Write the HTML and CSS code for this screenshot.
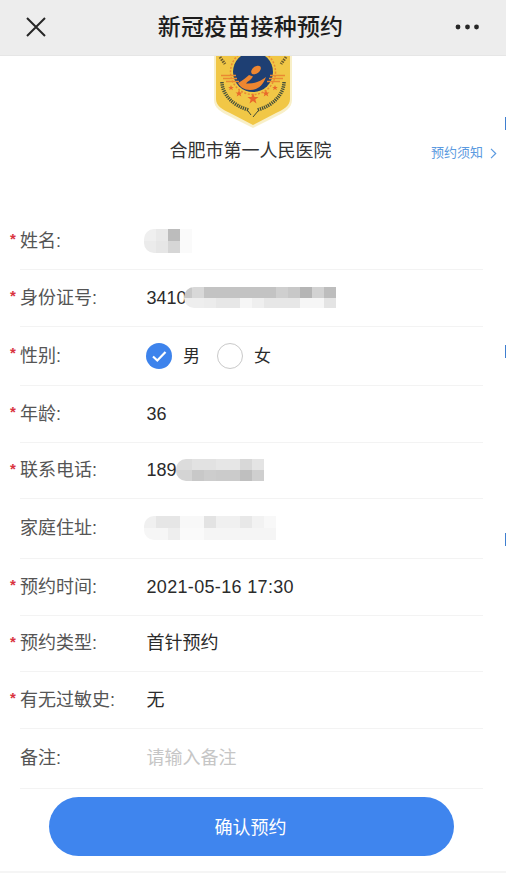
FILE: index.html
```html
<!DOCTYPE html>
<html lang="zh-CN">
<head>
<meta charset="utf-8">
<title>新冠疫苗接种预约</title>
<link rel="stylesheet" href="styles.css">
</head>
<body>
<div class="page">
  <header class="topbar">
    <svg class="close-icon" width="22" height="22" viewBox="0 0 22 22"><path d="M2 2 20 20M20 2 2 20" fill="none" stroke="#262626" stroke-width="2"/></svg>
    <h1 class="title">新冠疫苗接种预约</h1>
    <svg class="more-icon" width="28" height="6" viewBox="0 0 28 6"><circle cx="4" cy="3" r="2.4" fill="#262626"/><circle cx="13.5" cy="3" r="2.4" fill="#262626"/><circle cx="22.5" cy="3" r="2.4" fill="#262626"/></svg>
  </header>

  <section class="hero">
    <svg class="badge" width="80" height="73" viewBox="0 0 80 73">
      <path d="M1 0V44C1 52 8 56 16 60L40 72 64 60C72 56 79 52 79 44V0Z" fill="#f8efc8"/>
      <path d="M3 0V43C3 50 10 54 17 57L40 69 63 57C70 54 77 50 77 43V0Z" fill="#f1c746"/>
      <path d="M7 1 12 8M73 1 68 8" stroke="#6b5a2c" stroke-width="3" stroke-dasharray="1.500 1"/>
      <circle cx="40" cy="16" r="22.500" fill="none" stroke="#e98b35" stroke-width="1.500" stroke-dasharray="2 1.500"/>
      <circle cx="40" cy="16" r="20" fill="#1e3f73"/>
      <path d="M8 19.500H23M10 22.500H24M13 25.500H26M72 19.500H57M70 22.500H56M67 25.500H54" stroke="#ea8a32" stroke-width="1.400"/>
      <ellipse cx="43" cy="14" rx="5.500" ry="3.500" transform="rotate(-38 43 14)" fill="#ee8630"/>
      <path d="M25 27C30 24 33 22 36 19L40 20.500C38 24 35 25 33 27.500C40 28 47 26 53 21C50 30 44 34 37 34C31 34 27 31 25 27Z" fill="#ee8630"/>
      <path d="M9 26C9 38 20 50 36 54" fill="none" stroke="#46503a" stroke-width="3.500" stroke-dasharray="1.300 .9"/>
      <path d="M71 26C71 38 60 50 44 54" fill="none" stroke="#46503a" stroke-width="3.500" stroke-dasharray="1.300 .9"/>
      <path d="M35 55 38 59M45 55 40 61" stroke="#3f4a38" stroke-width="1"/>
      <path d="M40 37 41.500 41H45.500L42.300 43.500 43.500 47.500 40 45 36.500 47.500 37.700 43.500 34.500 41H38.500Z" fill="#e9692c"/>
      <path d="M26 34 27 36.500H29.500L27.500 38 28.300 40.500 26 39 23.700 40.500 24.500 38 22.500 36.500H25Z" fill="#e9692c"/>
      <path d="M53 34 54 36.500H56.500L54.500 38 55.300 40.500 53 39 50.700 40.500 51.500 38 49.500 36.500H52Z" fill="#e9692c"/>
      <path d="M18 29 18.800 31H20.800L19.200 32.200 19.800 34.200 18 33 16.200 34.200 16.800 32.200 15.200 31H17.200Z" fill="#e9692c"/>
      <path d="M62 29 62.800 31H64.800L63.200 32.200 63.800 34.200 62 33 60.200 34.200 60.800 32.200 59.200 31H61.200Z" fill="#e9692c"/>
    </svg>
    <div class="hero-line">
      <span></span>
      <h2 class="hospital">合肥市第一人民医院</h2>
      <a class="notice">预约须知<svg width="7" height="11" viewBox="0 0 7 11"><path d="M1 .8 5.700 5.500 1 10.200" fill="none" stroke="#5b9ae0" stroke-width="1.200"/></svg></a>
    </div>
  </section>

  <form class="form">
    <div class="row h57"><i class="star">*</i><div class="cell"><span class="label">姓名:</span>
      <svg class="mosaic shift-name" width="48" height="24" viewBox="0 0 48 24"><rect width="12" height="12" fill="#efefef"/><rect x="12" width="12" height="12" fill="#e9e9e9"/><rect x="24" width="12" height="12" fill="#bcbcbc"/><rect x="36" width="12" height="12" fill="#fafafa"/><rect y="12" width="12" height="12" fill="#ebebeb"/><rect x="12" y="12" width="12" height="12" fill="#e6e6e6"/><rect x="24" y="12" width="12" height="12" fill="#d6d6d6"/><rect x="36" y="12" width="12" height="12" fill="#fafafa"/></svg>
    </div></div>
    <div class="row h57"><i class="star">*</i><div class="cell"><span class="label">身份证号:</span><span class="value">3410</span>
      <svg class="mosaic shift-id" width="152" height="21" viewBox="0 0 152 21"><g><rect width="8" height="11" fill="#c8c8c8"/><rect x="8" width="12" height="11" fill="#d8d8d8"/><rect x="20" width="72" height="11" fill="#c3c3c3"/><rect x="92" width="12" height="11" fill="#cfcfcf"/><rect x="104" width="12" height="11" fill="#c8c8c8"/><rect x="116" width="12" height="11" fill="#b5b5b5"/><rect x="128" width="12" height="11" fill="#d2d2d2"/><rect x="140" width="12" height="11" fill="#bdbdbd"/></g><g><rect y="11" width="20" height="10" fill="#eeeeee"/><rect x="20" y="11" width="12" height="10" fill="#ececec"/><rect x="32" y="11" width="24" height="10" fill="#e7e7e7"/><rect x="56" y="11" width="12" height="10" fill="#f6f6f6"/><rect x="68" y="11" width="12" height="10" fill="#efefef"/><rect x="80" y="11" width="36" height="10" fill="#e7e7e7"/><rect x="116" y="11" width="24" height="10" fill="#f6f6f6"/><rect x="140" y="11" width="12" height="10" fill="#e4e4e4"/></g></svg>
    </div></div>
    <div class="row h59"><i class="star">*</i><div class="cell"><span class="label">性别:</span>
      <div class="radios">
        <svg class="radio-icon" width="26" height="26" viewBox="0 0 26 26"><circle cx="13" cy="13" r="13" fill="#3d83ec"/><path d="M7 13.500 11.300 17.500 19.500 9" fill="none" stroke="#fff" stroke-width="2.200"/></svg>
        <span class="option">男</span>
        <span class="radio-off"></span>
        <span class="option">女</span>
      </div>
    </div></div>
    <div class="row h57"><i class="star">*</i><div class="cell"><span class="label">年龄:</span><span class="value">36</span></div></div>
    <div class="row h56"><i class="star">*</i><div class="cell"><span class="label">联系电话:</span><span class="value">189</span>
      <svg class="mosaic shift-phone" width="88" height="22" viewBox="0 0 88 22"><g><rect width="16" height="11" fill="#dcdcdc"/><rect x="16" width="24" height="11" fill="#e2e2e2"/><rect x="40" width="24" height="11" fill="#e6e6e6"/><rect x="64" width="12" height="11" fill="#d8d8d8"/><rect x="76" width="12" height="11" fill="#e4e4e4"/></g><g><rect y="11" width="16" height="11" fill="#d4d4d4"/><rect x="16" y="11" width="12" height="11" fill="#c8c8c8"/><rect x="28" y="11" width="12" height="11" fill="#cdcdcd"/><rect x="40" y="11" width="24" height="11" fill="#cbcbcb"/><rect x="64" y="11" width="12" height="11" fill="#bfbfbf"/><rect x="76" y="11" width="12" height="11" fill="#cfcfcf"/></g></svg>
    </div></div>
    <div class="row h60"><i class="star"></i><div class="cell"><span class="label">家庭住址:</span>
      <svg class="mosaic shift-name" width="132" height="24" viewBox="0 0 132 24"><g><rect width="12" height="12" fill="#f0f0f0"/><rect x="12" width="24" height="12" fill="#e6e6e6"/><rect x="36" width="24" height="12" fill="#f8f8f8"/><rect x="60" width="12" height="12" fill="#e3e3e3"/><rect x="72" width="24" height="12" fill="#f0f0f0"/><rect x="96" width="12" height="12" fill="#e8e8e8"/><rect x="108" width="12" height="12" fill="#f2f2f2"/><rect x="120" width="12" height="12" fill="#f8f8f8"/></g><g><rect y="12" width="24" height="12" fill="#f6f6f6"/><rect x="24" y="12" width="12" height="12" fill="#eeeeee"/><rect x="36" y="12" width="24" height="12" fill="#fafafa"/><rect x="60" y="12" width="72" height="12" fill="#f5f5f5"/></g></svg>
    </div></div>
    <div class="row h57"><i class="star">*</i><div class="cell"><span class="label">预约时间:</span><span class="value date">2021-05-16 17:30</span></div></div>
    <div class="row h56"><i class="star">*</i><div class="cell"><span class="label">预约类型:</span><span class="value">首针预约</span></div></div>
    <div class="row h57"><i class="star">*</i><div class="cell"><span class="label">有无过敏史:</span><span class="value">无</span></div></div>
    <div class="row h60"><i class="star"></i><div class="cell"><span class="label">备注:</span><span class="value placeholder">请输入备注</span></div></div>
  </form>

  <button class="submit" type="button">确认预约</button>
  <div class="footer-line"></div>

  <span class="edge edge-a"></span>
  <span class="edge edge-b"></span>
  <span class="edge edge-c"></span>
</div>
</body>
</html>
```

FILE: styles.css
```css
* { box-sizing: border-box; }
html, body { margin: 0; padding: 0; background: #fff; }
body { font-family: "Liberation Sans", "Noto Sans CJK SC", sans-serif; color: #2b2b2b; }
.page { position: relative; width: 506px; height: 873px; overflow: hidden; display: flex; flex-direction: column; }

.topbar { flex: none; height: 56px; background: #ededed; display: grid; grid-template-columns: 1fr auto 1fr; align-items: center; border-bottom: 1px solid #e6e6e6; }
.close-icon { margin: 0 0 1px 25px; }
.title { margin: 0 5px 1px 0; font-size: 23px; line-height: 30px; font-weight: 500; color: #1c1c1c; letter-spacing: 0.2px; }
.more-icon { justify-self: end; margin: 0 24px 2px 0; }

.hero { flex: none; height: 157px; display: flex; flex-direction: column; align-items: center; }
.badge { flex: none; margin-left: -1px; }
.hero-line { width: 100%; margin-top: 10px; display: grid; grid-template-columns: 1fr auto 1fr; align-items: center; }
.hospital { margin: 0 5px 0 0; font-size: 18px; line-height: 24px; font-weight: 400; color: #333; }
.notice { justify-self: end; margin-right: 9px; margin-top: 4px; display: flex; align-items: center; gap: 7px; font-size: 13px; line-height: 18px; color: #5b9ae0; }

.form { flex: none; display: flex; flex-direction: column; }
.row { display: flex; margin: 0 23px 0 10px; }
.h56 { height: 56px; }
.h57 { height: 57px; }
.h59 { height: 59px; }
.h60 { height: 60px; }
.star { flex: none; width: 10px; padding-top: 19px; font-style: normal; font-size: 15px; line-height: 14px; font-weight: 700; color: #d9343f; }
.cell { flex: 1; display: flex; align-items: center; border-bottom: 1px solid #f3f3f3; padding-bottom: 1px; }
.label { flex: none; width: 126.500px; font-size: 18px; line-height: 24px; color: #555; }
.value { font-size: 18px; line-height: 24px; color: #2b2b2b; }
.date { letter-spacing: 0.33px; }
.placeholder { color: #c6c6c6; }

.mosaic { flex: none; display: block; border-radius: 10px 0 0 10px; }
.shift-name { margin-left: -2.500px; }
.shift-id { margin-left: -2.500px; }
.shift-phone { margin-left: -0.500px; }

.radios { display: flex; align-items: center; }
.radio-icon { flex: none; margin-left: -0.500px; }
.option { font-size: 17px; line-height: 24px; color: #2b2b2b; margin: 2px 17px 0 11px; }
.radio-off { flex: none; width: 26px; height: 26px; border-radius: 50%; border: 1px solid #c9c9c9; }

.submit { flex: none; align-self: flex-start; margin: 8px 0 0 49px; width: 405px; height: 59px; border: 0; border-radius: 30px; padding: 0 2px 2px 0; background: #3f85ee; color: #fff; font-family: inherit; font-size: 18px; }
.footer-line { flex: none; height: 2px; margin-top: 15px; background: #f5f5f5; }

.edge { position: absolute; right: 0; width: 1px; height: 13px; background: #3f7fd0; }
.edge-a { top: 117px; }
.edge-b { top: 345px; }
.edge-c { top: 533px; }
```
